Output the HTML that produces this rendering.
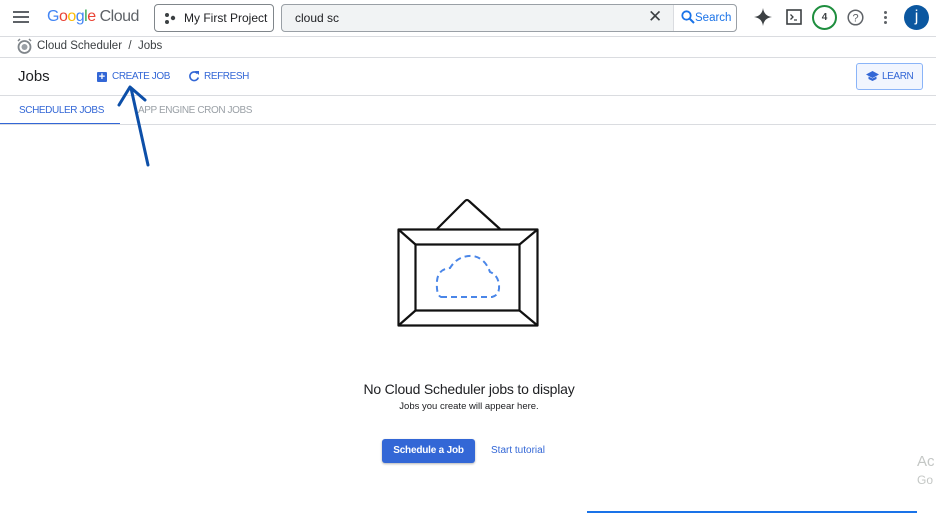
<!DOCTYPE html>
<html><head><style>
*{box-sizing:border-box;margin:0;padding:0}
body{width:936px;height:513px;overflow:hidden;background:#fff;font-family:"Liberation Sans",Arial,sans-serif;position:relative;color:#202124}
.a{position:absolute}
.hl{position:absolute;left:0;width:936px;height:1px;background:#dadce0}
.t{letter-spacing:-0.4px}
</style></head><body>
<div class="a" style="left:13px;top:11px;width:16px;height:2px;background:#5f6368;box-shadow:0 5px 0 #5f6368,0 10px 0 #5f6368"></div>
<div class="a" style="left:47px;top:8px;font-size:16px;letter-spacing:-0.5px"><span style="color:#4285f4">G</span><span style="color:#ea4335">o</span><span style="color:#fbbc05">o</span><span style="color:#4285f4">g</span><span style="color:#34a853">l</span><span style="color:#ea4335">e</span> <span style="color:#5f6368">Cloud</span></div>
<div class="a" style="left:154px;top:4px;width:120px;height:28px;border:1px solid #80868b;border-radius:4px;font-size:12px;line-height:26px;padding-left:29px">My First Project</div>
<svg class="a" style="left:164px;top:12px" width="12" height="12"><circle cx="3" cy="3" r="2" fill="#3c4043"/><circle cx="9" cy="6" r="2.2" fill="#3c4043"/><circle cx="3" cy="10" r="2" fill="#3c4043"/></svg>
<div class="a" style="left:281px;top:4px;width:456px;height:28px;border:1px solid #9aa0a6;border-radius:4px;background:#f1f3f4"></div>
<div class="a" style="left:295px;top:11px;font-size:12px">cloud sc</div>
<div class="a" style="left:648px;top:7px;font-size:17px;color:#3c4043">✕</div>
<div class="a" style="left:673px;top:5px;width:63px;height:26px;background:#fff;border-left:1px solid #dadce0;border-radius:0 4px 4px 0;font-size:11.5px;color:#1a73e8;line-height:26px;padding-left:21px">Search</div>
<svg class="a" style="left:681px;top:10px" width="14" height="14"><circle cx="5.5" cy="5.5" r="4.2" stroke="#1a73e8" stroke-width="1.8" fill="none"/><path d="M8.5 8.5 13 13" stroke="#1a73e8" stroke-width="2"/></svg>
<svg class="a" style="left:754px;top:8px" width="18" height="18"><path d="M9 0Q10 8 18 9Q10 10 9 18Q8 10 0 9Q8 8 9 0Z" fill="#3c4043"/></svg>
<svg class="a" style="left:786px;top:9px" width="16" height="16"><rect x="1" y="1" width="14" height="14" fill="none" stroke="#3c4043" stroke-width="1.6"/><path d="M4.5 5.5 7 8 4.5 10.5M8 11h3" stroke="#3c4043" stroke-width="1.3" fill="none"/></svg>
<div class="a" style="left:812px;top:5px;width:25px;height:25px;border:2px solid #1e8e3e;border-radius:50%;font-size:10px;font-weight:bold;text-align:center;line-height:21px;color:#3c4043">4</div>
<svg class="a" style="left:847px;top:9px" width="17" height="17"><circle cx="8.5" cy="8.5" r="7.3" fill="none" stroke="#5f6368" stroke-width="1.5"/><text x="8.5" y="12.5" font-size="11" text-anchor="middle" fill="#5f6368" font-family="Liberation Sans">?</text></svg>
<div class="a" style="left:884px;top:11px;width:3px;height:3px;background:#5f6368;border-radius:50%;box-shadow:0 5px 0 #5f6368,0 10px 0 #5f6368"></div>
<div class="a" style="left:904px;top:5px;width:25px;height:25px;border-radius:50%;background:#0b57a0;color:#fff;text-align:center;font-size:16px;line-height:24px">j</div>
<div class="hl" style="top:36px"></div>
<svg class="a" style="left:16px;top:38px" width="17" height="17"><circle cx="8.5" cy="9" r="6" fill="none" stroke="#80868b" stroke-width="1.8"/><circle cx="8.5" cy="9" r="3" fill="#9aa0a6"/><path d="M2 3 4 1M15 3 13 1" stroke="#80868b" stroke-width="1.5"/></svg>
<div class="a" style="left:37px;top:40px;font-size:11.5px;color:#3c4043">Cloud Scheduler &nbsp;/&nbsp; Jobs</div>
<div class="hl" style="top:57px"></div>
<div class="a" style="left:18px;top:68px;font-size:15px">Jobs</div>
<div class="a" style="left:97px;top:72px;width:10px;height:10px;background:#3367d6;border-radius:1px;color:#fff;font-size:11px;line-height:10px;text-align:center;font-weight:bold">+</div>
<div class="a t" style="left:112px;top:71px;font-size:10px;color:#3367d6">CREATE JOB</div>
<svg class="a" style="left:188px;top:70px" width="12" height="12"><path d="M9.5 3.5A4.3 4.3 0 1 0 10.3 7.5" fill="none" stroke="#3367d6" stroke-width="1.6"/><path d="M7 1h4v4z" fill="#3367d6"/></svg>
<div class="a t" style="left:204px;top:71px;font-size:10px;color:#3367d6">REFRESH</div>
<div class="a t" style="left:856px;top:63px;width:67px;height:27px;border:1px solid #8ab4f8;border-radius:3px;background:#f1f5fe;font-size:10px;color:#3367d6;line-height:25px;padding-left:25px">LEARN</div>
<svg class="a" style="left:866px;top:71px" width="13" height="10"><path d="M6.5 0 13 3.5 6.5 7 0 3.5z M2.5 5.5v2.5l4 2 4-2v-2.5l-4 2z" fill="#3367d6"/></svg>
<div class="hl" style="top:95px"></div>
<div class="a t" style="left:19px;top:105px;font-size:10px;color:#3367d6">SCHEDULER JOBS</div>
<div class="a t" style="left:138px;top:105px;font-size:10px;color:#9aa0a6">APP ENGINE CRON JOBS</div>
<div class="a" style="left:0;top:123px;width:120px;height:2px;background:#3367d6"></div>
<div class="hl" style="top:124px"></div>
<svg class="a" style="left:115px;top:80px" width="50" height="90"><path d="M33 85 16 8M4 25 15 7 30 20" fill="none" stroke="#0d4fa8" stroke-width="3" stroke-linecap="round" stroke-linejoin="round"/></svg>
<svg class="a" style="left:390px;top:195px" width="160" height="140">
<g fill="none" stroke="#111" stroke-width="2.2" stroke-linejoin="round">
<path d="M47 34 75 6Q77 4 79 6L110 34"/>
<rect x="8.5" y="34.5" width="139" height="96"/>
<rect x="25.5" y="49.5" width="104" height="66"/>
<path d="M8.5 34.5 25.5 49.5M147.5 34.5 129.5 49.5M8.5 130.5 25.5 115.5M147.5 130.5 129.5 115.5"/>
</g>
<path d="M51 102H102Q110 100 109 90Q108 80 100 77Q95 63 83 61Q68 60 60 73Q48 74 47 86Q46 100 51 102Z" fill="none" stroke="#4a86e8" stroke-width="2" stroke-dasharray="6 4"/>
</svg>
<div class="a" style="left:0;width:936px;text-align:center;top:381px;font-size:14px;padding-left:2px;letter-spacing:-0.2px">No Cloud Scheduler jobs to display</div>
<div class="a" style="left:0;width:936px;text-align:center;top:401px;font-size:9.5px;padding-left:2px">Jobs you create will appear here.</div>
<div class="a" style="left:382px;top:439px;width:93px;height:24px;background:#3367d6;border-radius:3px;color:#fff;font-size:10px;font-weight:bold;text-align:center;line-height:24px;box-shadow:0 1px 2px rgba(0,0,0,.3);letter-spacing:-0.2px">Schedule a Job</div>
<div class="a" style="left:491px;top:445px;font-size:10px;color:#3367d6">Start tutorial</div>
<div class="a" style="left:917px;top:453px;font-size:15px;color:#c4c7c5">Ac</div>
<div class="a" style="left:917px;top:473px;font-size:12px;color:#c4c7c5">Go</div>
<div class="a" style="left:587px;top:511px;width:330px;height:2px;background:#1a73e8"></div>
</body></html>
